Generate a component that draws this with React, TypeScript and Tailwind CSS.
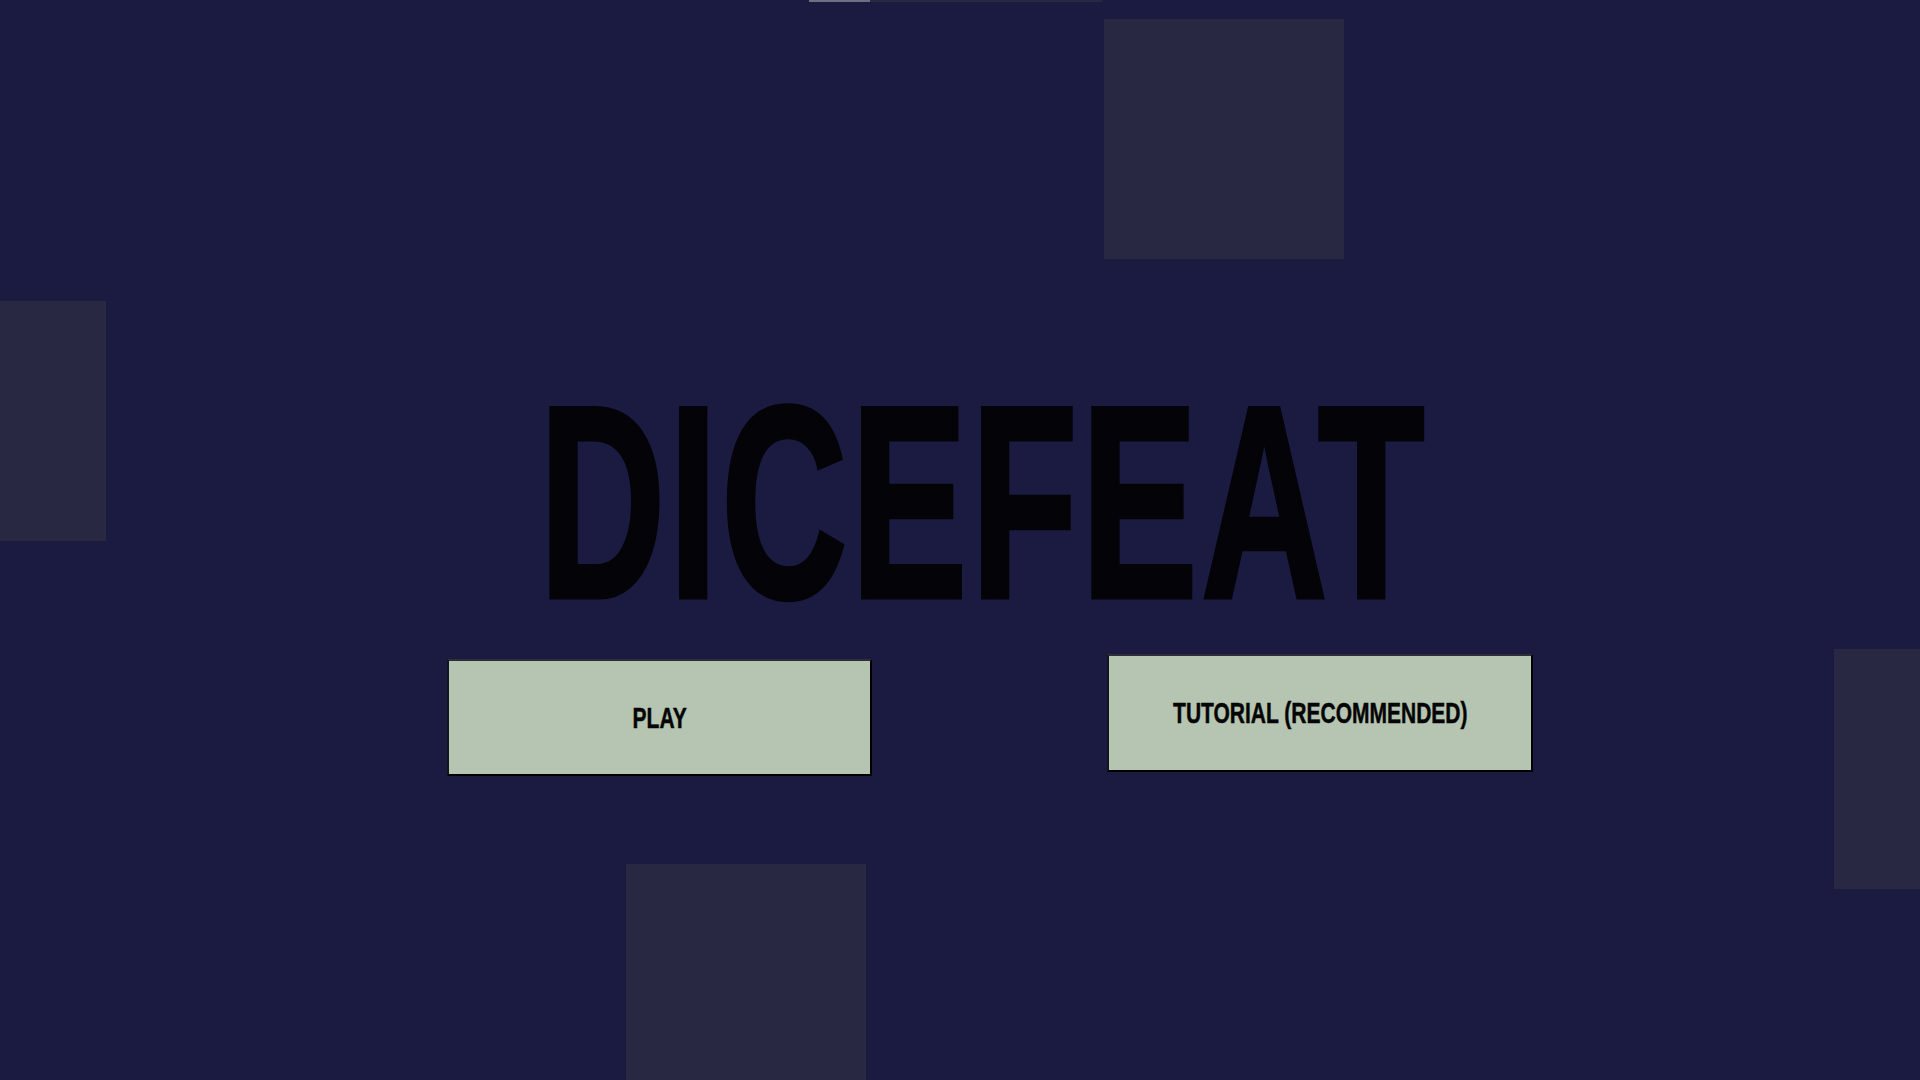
import React from 'react';

const squares = [
  'left-[1104px] top-[19px]',
  'left-[-134px] top-[301px]',
  'left-[1834px] top-[649px]',
  'left-[626px] top-[864px]',
];

const MenuButton: React.FC<{ label: string; className?: string }> = ({ label, className = '' }) => (
  <button
    className={`flex h-[117px] w-[425px] items-center justify-center border-2 border-solid border-t-[#2e2e38] border-l-[#14141c] border-r-black border-b-black bg-[#b6c5b1] ${className}`}
  >
    <span className="inline-block scale-x-[0.7] whitespace-nowrap font-['Liberation_Sans',Arial,sans-serif] text-[30px] leading-none font-bold text-[#050505] [-webkit-text-stroke:0.5px_#050505]">
      {label}
    </span>
  </button>
);

export default function App() {
  return (
    <div className="relative h-[1080px] w-[1920px] overflow-hidden bg-[#1b1b42]">
      {squares.map((pos) => (
        <div key={pos} className={`absolute h-[240px] w-[240px] bg-[#282843] ${pos}`} />
      ))}
      {/* square peeking in from above the top edge */}
      <div className="absolute left-[809px] top-0 h-[2px] w-[293px] bg-[#282843]" />
      <div className="absolute left-[809px] top-0 h-[2px] w-[61px] bg-[#6f6f82]" />

      <div className="relative flex flex-col pt-[365px]">
        <div className="flex h-[276px] justify-center pl-[47px]">
          <h1 className="inline-block scale-x-[0.636] whitespace-nowrap font-['Liberation_Sans',Arial,sans-serif] text-[274px] leading-none font-bold tracking-[6px] text-[#030308] [-webkit-text-stroke:5px_#030308]">
            DICEFEAT
          </h1>
        </div>
        <div className="mt-[13px] flex items-start">
          <MenuButton label="PLAY" className="ml-[447px] mt-[5px]" />
          <MenuButton label="TUTORIAL (RECOMMENDED)" className="ml-[235px] w-[426px] h-[118px]" />
        </div>
      </div>
    </div>
  );
}
